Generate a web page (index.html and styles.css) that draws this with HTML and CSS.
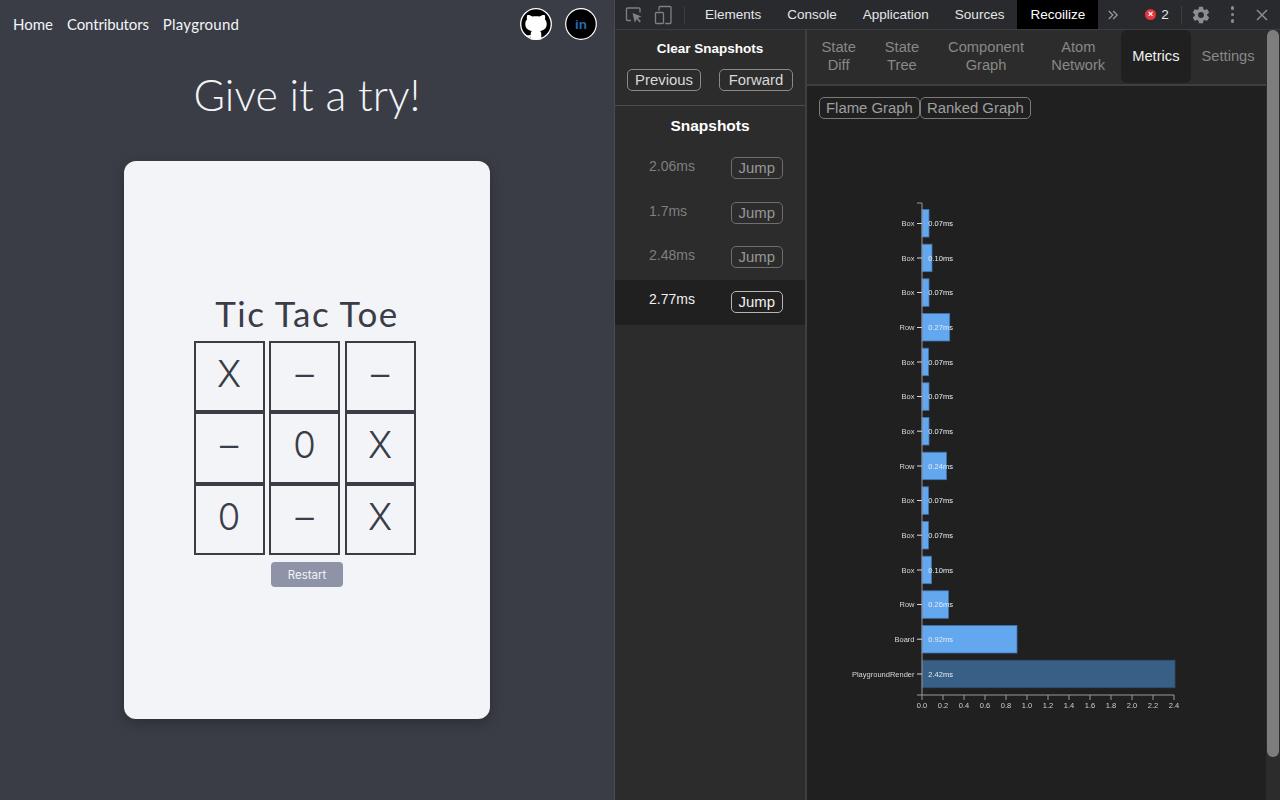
FILE: index.html
```html
<!DOCTYPE html>
<html lang="en">
<head>
<meta charset="utf-8">
<title>Recoilize Playground</title>
<link rel="stylesheet" href="styles.css">
</head>
<body>
<main class="site">
  <nav class="nav">
    <div class="nav-links"><a class="nl-home">Home</a><a class="nl-con">Contributors</a><a class="nl-play">Playground</a></div>
    <div class="socials">
      <span class="social">
        <svg viewBox="0 0 32 32" width="32" height="32"><circle cx="16" cy="16" r="15.300" fill="#000" stroke="#fff" stroke-width="1.300"/><path d="M7.300 7c1.600-.3 3.700.3 5.100 1.600 2.200-.5 5-.5 7.200 0C21 7.300 23.100 6.700 24.700 7c.6 1.600.6 3.100.2 4.300 1.200 1.300 1.800 2.800 1.800 4.600 0 4.700-3.200 6.500-6.600 7 .8.7 1.200 1.800 1.200 3.200v5.300h-10.600v-2.600c-2.800.6-4.900-.4-6.200-3.400 1.400 1.900 3.400 2.100 6.200 1.600v-.9c0-1.400.4-2.500 1.200-3.200-3.400-.5-6.600-2.300-6.600-7 0-1.800.6-3.300 1.800-4.600-.4-1.200-.4-2.700.2-4.300z" fill="#fff"/></svg>
      </span>
      <span class="social">
        <svg viewBox="0 0 32 32" width="32" height="32"><circle cx="16" cy="16" r="15.300" fill="#000" stroke="#fff" stroke-width="1.200"/><text x="16" y="20.800" text-anchor="middle" class="in">in</text></svg>
      </span>
    </div>
  </nav>
  <h1 class="try">Give it a try!</h1>
  <section class="card">
    <h2 class="game-title">Tic Tac Toe</h2>
    <div class="board">
      <div class="cell">X</div><div class="cell">–</div><div class="cell">–</div>
      <div class="cell">–</div><div class="cell">0</div><div class="cell">X</div>
      <div class="cell">0</div><div class="cell">–</div><div class="cell">X</div>
    </div>
    <button class="restart">Restart</button>
  </section>
</main>
<section class="devtools">
  <header class="dt-bar">
    <div class="dt-icons">
      <svg viewBox="0 0 18 18" width="18" height="18"><path d="M6 14.500H2.500a1 1 0 0 1-1-1V3a1 1 0 0 1 1-1H14a1 1 0 0 1 1 1v3.500" fill="none" stroke="#7d8085" stroke-width="1.300"/><path d="M7.500 7l9 3.400-3.600 1.500 3 3.300-1.300 1.200-3-3.300-1.700 3.600z" fill="#7d8085"/></svg>
      <svg viewBox="0 0 18 20" width="18" height="20"><path d="M5 5.500V2.500a1 1 0 0 1 1-1h10a1 1 0 0 1 1 1v15a1 1 0 0 1-1 1h-5" fill="none" stroke="#7d8085" stroke-width="1.300"/><rect x="1.500" y="7.500" width="8" height="11" rx="1" fill="none" stroke="#7d8085" stroke-width="1.300"/></svg>
      <i class="dt-sep"></i>
    </div>
    <div class="dt-tabs">
      <span class="dt-tab">Elements</span><span class="dt-tab">Console</span><span class="dt-tab">Application</span><span class="dt-tab">Sources</span><span class="dt-tab dt-tab-on">Recoilize</span>
    </div>
    <span class="dt-more"><svg viewBox="0 0 10 10" width="10" height="10"><path d="M.8 1l4 4-4 4M5.200 1l4 4-4 4" fill="none" stroke="#9a9da1" stroke-width="1.200"/></svg></span>
    <div class="dt-right">
      <span class="err-dot">×</span><span class="err-num">2</span><i class="dt-sep"></i>
      <svg class="gear" viewBox="0 0 24 24" width="20" height="20"><path fill="#8a8d92" d="M19.400 13c.04-.33.06-.66.06-1s-.02-.67-.07-1l2.100-1.650c.2-.15.240-.42.120-.64l-2-3.460c-.120-.22-.390-.3-.610-.22l-2.490 1c-.52-.4-1.080-.73-1.690-.98l-.38-2.650A.49.49 0 0 0 13.950 2h-4a.49.49 0 0 0-.49.420l-.38 2.650c-.61.25-1.170.59-1.690.98l-2.490-1c-.23-.09-.49 0-.61.220l-2 3.460c-.13.220-.07.490.12.640L4.520 11c-.04.330-.07.670-.07 1s.03.670.07 1l-2.110 1.650c-.19.150-.25.420-.12.640l2 3.460c.12.220.39.300.61.220l2.490-1c.52.400 1.080.730 1.690.980l.38 2.650c.03.240.24.420.49.420h4c.25 0 .46-.18.49-.42l.38-2.650c.61-.25 1.170-.59 1.690-.98l2.490 1c.23.090.49 0 .61-.22l2-3.460c.12-.22.070-.49-.12-.64L19.400 13zM12 15.500a3.500 3.500 0 1 1 0-7 3.500 3.500 0 0 1 0 7z"/></svg>
      <span class="kebab"><i></i><i></i><i></i></span>
      <svg class="close" viewBox="0 0 12 12" width="12" height="12"><path d="M1 1l10 10M11 1L1 11" stroke="#8a8d92" stroke-width="1.500"/></svg>
    </div>
  </header>
  <div class="dt-body">
    <aside class="snap">
      <div class="snap-top">
        <div class="clear">Clear Snapshots</div>
        <div class="snap-nav"><button class="btn">Previous</button><button class="btn">Forward</button></div>
      </div>
      <h3 class="snap-title">Snapshots</h3>
      <ul class="snap-list">
        <li class="snap-row"><span class="ms">2.06ms</span><button class="btn jump">Jump</button></li>
        <li class="snap-row"><span class="ms">1.7ms</span><button class="btn jump">Jump</button></li>
        <li class="snap-row"><span class="ms">2.48ms</span><button class="btn jump">Jump</button></li>
        <li class="snap-row snap-on"><span class="ms">2.77ms</span><button class="btn jump">Jump</button></li>
      </ul>
    </aside>
    <div class="panel">
      <div class="tabs">
        <span class="tab tab-wide">State<br>Diff</span>
        <span class="tab tab-wide">State<br>Tree</span>
        <span class="tab tab-wide">Component<br>Graph</span>
        <span class="tab tab-atom">Atom<br>Network</span>
        <span class="tab tab-on">Metrics</span>
        <span class="tab">Settings</span>
      </div>
      <div class="metrics">
        <div class="graph-btns"><button class="btn">Flame Graph</button><button class="btn">Ranked Graph</button></div>
        <svg class="chart" viewBox="0 0 459 610" width="459" height="610">
          <g class="bars">
            <rect x="115" y="14.500" width="7" height="27.500"/>
            <rect x="115" y="49.200" width="10" height="27.500"/>
            <rect x="115" y="83.800" width="7" height="27.500"/>
            <rect x="115" y="118.500" width="27.700" height="27.500"/>
            <rect x="115" y="153.200" width="6.500" height="27.500"/>
            <rect x="115" y="187.800" width="7" height="27.500"/>
            <rect x="115" y="222.500" width="7" height="27.500"/>
            <rect x="115" y="257.200" width="24.500" height="27.500"/>
            <rect x="115" y="291.800" width="6.500" height="27.500"/>
            <rect x="115" y="326.500" width="6.500" height="27.500"/>
            <rect x="115" y="361.200" width="9.500" height="27.500"/>
            <rect x="115" y="395.800" width="26.500" height="27.500"/>
            <rect x="115" y="430.500" width="95" height="27.500"/>
            <rect class="bar-dark" x="115" y="465.200" width="253" height="27.500"/>
          </g>
          <path class="axis" d="M110 8h5v492h-5M115 500h252v5M115 500v5M136 500v5M157 500v5M178 500v5M199 500v5M220 500v5M241 500v5M262 500v5M283 500v5M304 500v5M325 500v5M346 500v5"/>
          <path class="ticks" d="M110 28.500h5M110 63h5M110 97.500h5M110 132.500h5M110 167h5M110 201.500h5M110 236.200h5M110 271h5M110 305.500h5M110 340.200h5M110 375h5M110 409.500h5M110 444.200h5M110 479h5"/>
          <g class="labels">
            <text x="107.500" y="31">Box</text><text x="107.500" y="65.500">Box</text><text x="107.500" y="100">Box</text><text x="107.500" y="135">Row</text><text x="107.500" y="169.500">Box</text><text x="107.500" y="204">Box</text><text x="107.500" y="238.700">Box</text><text x="107.500" y="273.500">Row</text><text x="107.500" y="308">Box</text><text x="107.500" y="342.700">Box</text><text x="107.500" y="377.500">Box</text><text x="107.500" y="412">Row</text><text x="107.500" y="446.700">Board</text><text x="107.500" y="481.500">PlaygroundRender</text>
          </g>
          <g class="values">
            <text x="121.300" y="31">0.07ms</text><text x="121.300" y="65.500">0.10ms</text><text x="121.300" y="100">0.07ms</text><text x="121.300" y="135">0.27ms</text><text x="121.300" y="169.500">0.07ms</text><text x="121.300" y="204">0.07ms</text><text x="121.300" y="238.700">0.07ms</text><text x="121.300" y="273.500">0.24ms</text><text x="121.300" y="308">0.07ms</text><text x="121.300" y="342.700">0.07ms</text><text x="121.300" y="377.500">0.10ms</text><text x="121.300" y="412">0.26ms</text><text x="121.300" y="446.700">0.92ms</text><text x="121.300" y="481.500">2.42ms</text>
          </g>
          <g class="xlabels">
            <text x="115" y="513">0.0</text><text x="136" y="513">0.2</text><text x="157" y="513">0.4</text><text x="178" y="513">0.6</text><text x="199" y="513">0.8</text><text x="220" y="513">1.0</text><text x="241" y="513">1.2</text><text x="262" y="513">1.4</text><text x="283" y="513">1.6</text><text x="304" y="513">1.8</text><text x="325" y="513">2.0</text><text x="346" y="513">2.2</text><text x="367" y="513">2.4</text>
          </g>
        </svg>
      </div>
    </div>
    <div class="scroll"><span class="thumb"></span></div>
  </div>
</section>
</body>
</html>
```
FILE: styles.css
```css
* { box-sizing: border-box; }
html, body { margin: 0; height: 800px; overflow: hidden; }
body { display: flex; width: 1280px; background: #202020; font-family: "Liberation Sans", Arial, sans-serif; }
button { font: inherit; }

.site { width: 614px; height: 800px; background: #3a3d46; color: #f2f4f8; font-family: Lato, sans-serif; display: flex; flex-direction: column; align-items: center; }
.nav { width: 100%; height: 48px; padding: 8px 17px 0 13px; display: flex; justify-content: space-between; align-items: flex-start; }
.nav-links { display: flex; gap: 14px; font-size: 15px; line-height: 32px; }
.nl-con { letter-spacing: -.15px; }
.nl-play { letter-spacing: .25px; }
.socials { display: flex; gap: 13px; }
.social { display: block; width: 32px; height: 32px; }
.in { font: 700 13.500px "Liberation Sans", sans-serif; fill: #2a66b3; }
.try { margin: 16px 0 0; font-weight: 300; font-size: 43px; line-height: 62px; color: #f2f4f8; }
.card { width: 366px; height: 558px; margin-top: 35px; border-radius: 12px; background: #f2f4f8; box-shadow: 0 4px 14px rgba(0,0,0,.25); color: #3a3d46; display: flex; flex-direction: column; align-items: center; padding-top: 128px; }
.game-title { margin: 0; font-weight: 400; font-size: 35px; letter-spacing: 1.500px; line-height: 48px; }
.board { display: grid; grid-template-columns: repeat(3, 71px); grid-auto-rows: 71.300px; column-gap: 4.500px; margin: 4px 5px 0 0; }
.cell { border: 2px solid #3a3d46; display: flex; align-items: center; justify-content: center; padding-bottom: 5px; font: 350 36.500px Inter, sans-serif; }
.restart { margin-top: 7px; width: 72px; height: 25px; border: 0; border-radius: 4px; background: #8f93a8; color: #f2f4f8; font: 400 11.500px Inter, sans-serif; padding: 1px 0 0; }

.devtools { width: 666px; height: 800px; display: flex; flex-direction: column; border-left: 1px solid #4a4b4e; }
.dt-bar { height: 30px; flex: none; display: flex; align-items: center; background: #292a2d; border-bottom: 1px solid #3c3d40; color: #e4e6e8; font-size: 13.500px; }
.dt-icons { display: flex; align-items: center; gap: 11px; padding-left: 10px; width: 77px; flex: none; }
.dt-sep { display: block; width: 1px; height: 18px; background: #3c3d40; margin-left: 1px; flex: none; }
.dt-tabs { display: flex; align-self: stretch; }
.dt-tab { display: flex; align-items: center; padding: 0 13px; }
.dt-tab-on { background: #000; color: #fff; }
.dt-more { width: 29px; display: flex; justify-content: center; }
.dt-right { display: flex; align-items: center; margin-left: 18px; }
.err-dot { width: 11px; height: 11px; border-radius: 50%; background: #e0383c; color: #fff; font-size: 9px; line-height: 11px; text-align: center; font-weight: 700; }
.err-num { margin-left: 5px; font-size: 13.500px; }
.dt-right .dt-sep { margin-left: 12px; }
.gear { margin-left: 9px; }
.kebab { display: flex; flex-direction: column; gap: 3px; margin-left: 20px; }
.kebab i { display: block; width: 3.500px; height: 3.500px; border-radius: 50%; background: #8a8d92; }
.close { margin-left: 22px; }

.dt-body { flex: 1; display: flex; min-height: 0; }
.snap { width: 192px; flex: none; background: #2c2c2c; border-right: 2px solid #3f3f3f; color: #fff; }
.snap-top { height: 76px; border-bottom: 1px solid #4c4c4c; padding-top: 11px; }
.clear { text-align: center; font-weight: 700; font-size: 13.500px; line-height: 16px; }
.snap-nav { display: flex; justify-content: space-between; padding: 12px 12px 0; }
.snap-nav .btn { width: 74px; padding: 0; }
.btn { background: transparent; border: 1px solid #8a8a8a; border-radius: 5px; color: #d8d8d8; font-size: 14.900px; line-height: 20px; height: 22px; padding: 0 7px; white-space: nowrap; }
.snap-title { margin: 0; text-align: center; font-size: 15.500px; font-weight: 700; line-height: 18px; padding-top: 11px; height: 41px; }
.snap-list { list-style: none; margin: 0; padding: 0; }
.snap-row { height: 44.400px; display: flex; align-items: center; justify-content: space-between; padding: 0 22px 0 34px; color: #7f7f7f; font-size: 14px; }
.ms { position: relative; top: -3px; }
.snap-row .jump { color: #979797; border-color: #6f6f6f; margin-bottom: 1.500px; }
.snap-on { background: #202020; color: #f0f0f0; }
.snap-on .jump { color: #f0f0f0; border-color: #b5b5b5; }

.panel { flex: 1; min-width: 0; display: flex; flex-direction: column; background: #202020; }
.tabs { height: 56px; flex: none; display: flex; background: #2c2c2c; border-bottom: 2px solid #3f3f3f; color: #888; font-size: 14.700px; line-height: 18px; text-align: center; }
.tab { padding: 0 11px 2px; height: 53px; display: flex; align-items: center; }
.tab-wide { padding: 0 14.500px 2px; }
.tab-atom { padding-left: 12.800px; }
.tab-on { background: #202020; color: #f0f0f0; border-radius: 6px; margin-left: 5px; }
.metrics { flex: 1; padding: 11px 12px 0; }
.graph-btns { display: flex; }
.graph-btns .btn { color: #9e9e9e; border-color: #7a7a7a; padding: 0 6px; }
.chart { display: block; margin: 76px 0 0 -12px; will-change: transform; }
.bars rect { fill: #63a7ef; stroke: #3f74ae; stroke-width: .8; }
.bars .bar-dark { fill: #385f86; stroke: #2e4d6e; }
.axis, .ticks { fill: none; stroke: #999; stroke-width: 1; }
.ticks { stroke: #d8d8d8; }
.labels text { font-size: 7.500px; fill: #d6d6d6; text-anchor: end; }
.values text { font-size: 7.500px; fill: #e4ecf4; }
.xlabels text { font-size: 7.500px; fill: #cfcfcf; text-anchor: middle; }

.scroll { width: 14px; flex: none; background: #2c2c2c; padding: 0 0 0 1px; height: 770px; }
.thumb { display: block; width: 12px; height: 727px; border-radius: 6px; background: #7d7d7d; }
```
